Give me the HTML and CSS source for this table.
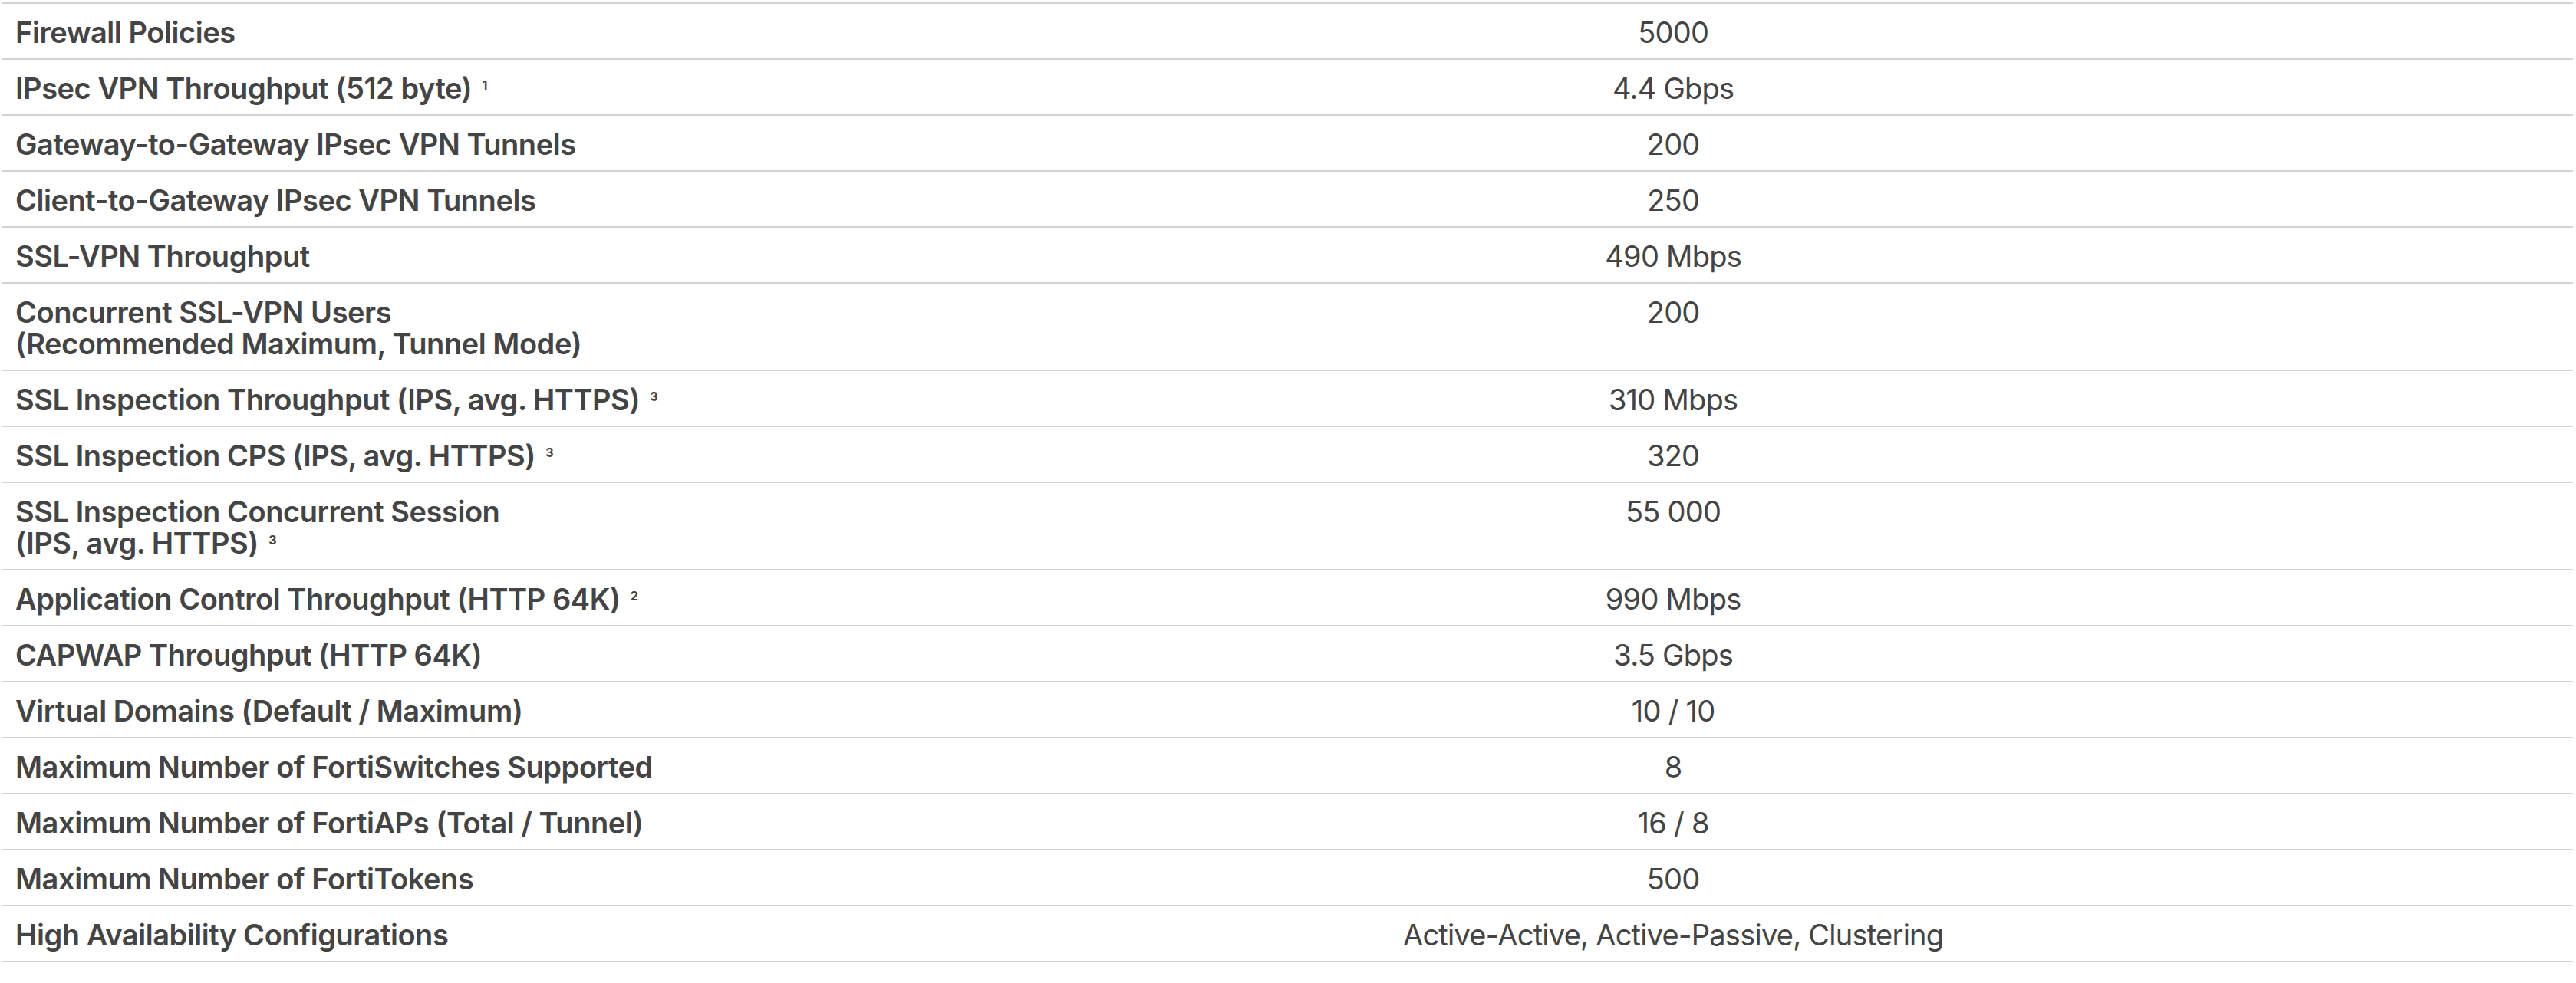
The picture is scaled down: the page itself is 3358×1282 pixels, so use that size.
FILE: index.html
```html
<!DOCTYPE html>
<html lang="en">
<head>
<meta charset="utf-8">
<title>Specifications</title>
<link rel="stylesheet" href="styles.css">
</head>
<body>
<div class="wrap">
<table class="specs">
<colgroup><col class="c-label"><col class="c-value"></colgroup>
<tbody>
<tr><th>Firewall Policies</th><td>5000</td></tr>
<tr><th>IPsec VPN Throughput (512 byte) <sup>1</sup></th><td>4.4 Gbps</td></tr>
<tr><th>Gateway-to-Gateway IPsec VPN Tunnels</th><td>200</td></tr>
<tr><th>Client-to-Gateway IPsec VPN Tunnels</th><td>250</td></tr>
<tr><th>SSL-VPN Throughput</th><td>490 Mbps</td></tr>
<tr><th>Concurrent SSL-VPN Users<br>(Recommended Maximum, Tunnel Mode)</th><td>200</td></tr>
<tr><th>SSL Inspection Throughput (IPS, avg. HTTPS) <sup>3</sup></th><td>310 Mbps</td></tr>
<tr><th>SSL Inspection CPS (IPS, avg. HTTPS) <sup>3</sup></th><td>320</td></tr>
<tr><th>SSL Inspection Concurrent Session<br>(IPS, avg. HTTPS) <sup>3</sup></th><td>55 000</td></tr>
<tr><th>Application Control Throughput (HTTP 64K) <sup>2</sup></th><td>990 Mbps</td></tr>
<tr><th>CAPWAP Throughput (HTTP 64K)</th><td>3.5 Gbps</td></tr>
<tr><th>Virtual Domains (Default / Maximum)</th><td>10 / 10</td></tr>
<tr><th>Maximum Number of FortiSwitches Supported</th><td>8</td></tr>
<tr><th>Maximum Number of FortiAPs (Total / Tunnel)</th><td>16 / 8</td></tr>
<tr><th>Maximum Number of FortiTokens</th><td>500</td></tr>
<tr><th>High Availability Configurations</th><td>Active-Active, Active-Passive, Clustering</td></tr>
</tbody>
</table>
</div>
</body>
</html>
```
FILE: styles.css
```css
html, body {
  margin: 0;
  padding: 0;
  background: #ffffff;
}

.wrap {
  padding: 3px 4px 0 3px;
}

.specs {
  width: 100%;
  border-collapse: collapse;
  table-layout: fixed;
  font-family: Inter, "Noto Sans", sans-serif;
  font-size: 38px;
  line-height: 41px;
  color: #444444;
}

.c-label {
  width: 30%;
}

.c-value {
  width: 70%;
}

.specs tr {
  border-top: 2px solid #d4d4d4;
  border-bottom: 2px solid #d4d4d4;
}

.specs th,
.specs td {
  padding: 17px 17px 13px 17px;
  vertical-align: top;
}

.specs th {
  text-align: left;
  font-weight: 600;
  letter-spacing: -0.45px;
  white-space: nowrap;
}

.specs td {
  text-align: center;
  font-weight: 400;
  letter-spacing: -0.75px;
}

.specs sup {
  font-size: 16px;
  line-height: 0;
  vertical-align: 12px;
  font-weight: 700;
  letter-spacing: 0;
  margin-left: 4px;
}
```
